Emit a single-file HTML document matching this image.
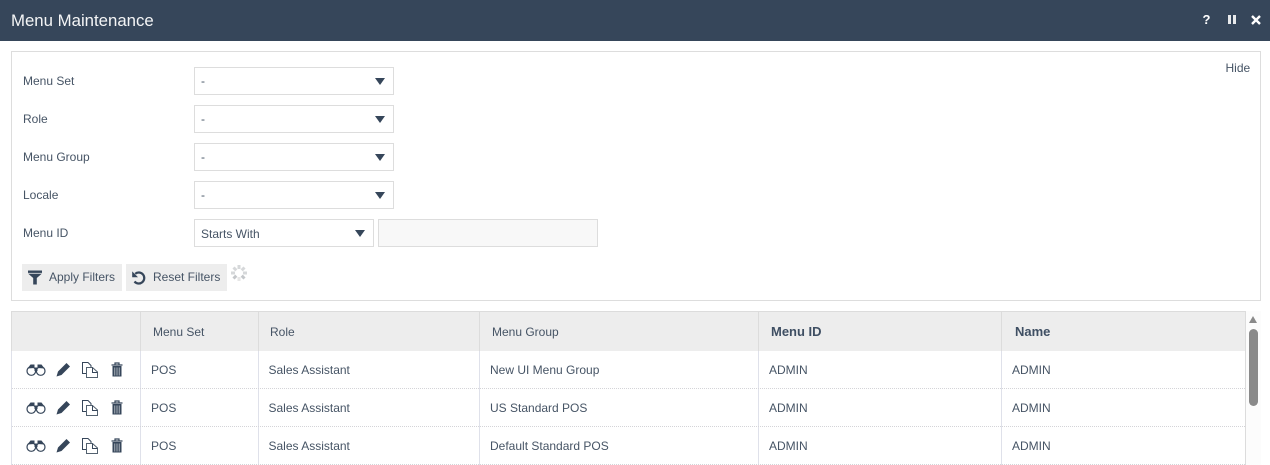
<!DOCTYPE html>
<html><head><meta charset="utf-8"><style>
html,body{margin:0;padding:0;background:#fff}
#p{position:relative;width:1270px;height:465px;overflow:hidden;background:#fff;font:12px/14px "Liberation Sans",sans-serif;color:#465465}
#p div,#p svg,#p span{position:absolute}
.t{white-space:nowrap}
.sel{background:#fff;border:1px solid #ddd;box-sizing:border-box;height:28px;width:200px;left:194px}
.sel span{left:6px;top:6px;white-space:nowrap}
.sel span.w{top:7px}
.arr{width:0;height:0;border-left:5.5px solid transparent;border-right:5.5px solid transparent;border-top:7px solid #36465a;top:10px}
.btn{background:#ededed;height:27px;top:264px}
.v{width:1px;background:#dfe1ea;top:351px;height:114px}
.hv{width:1px;background:#dcdcdc;top:312px;height:39px}
.d{left:12px;width:1233px;height:0;border-top:1px dotted #d4d4d8}
.h{top:325px}.hb{top:325px;font-weight:bold;font-size:13px;color:#3f4f63}
</style></head><body><div id="p">
<div style="left:0;top:0;width:1270px;height:41px;background:#36465a"></div>
<div class="t" style="left:11px;top:11px;font-size:16.8px;line-height:20px;color:#f4f5f6;">Menu Maintenance</div>
<div class="t" style="left:1202.500px;top:12px;font-size:13px;line-height:16px;font-weight:bold;color:#fff">?</div>
<div style="left:1228px;top:15px;width:3px;height:9px;background:#e8eaec"></div>
<div style="left:1233px;top:15px;width:3px;height:9px;background:#e8eaec"></div>
<svg style="left:1250px;top:14px" width="12" height="12" viewBox="0 0 12 12"><path d="M2 2L10 10M10 2L2 10" stroke="#fff" stroke-width="2.4"/></svg>

<div style="left:11px;top:51px;width:1248px;height:248px;border:1px solid #ddd"></div>
<div class="t" style="left:1225.500px;top:61px">Hide</div>

<div class="t" style="left:23px;top:74px">Menu Set</div>
<div class="t" style="left:23px;top:112px">Role</div>
<div class="t" style="left:23px;top:150px">Menu Group</div>
<div class="t" style="left:23px;top:188px">Locale</div>
<div class="t" style="left:23px;top:226px">Menu ID</div>

<div class="sel" style="top:67px"><span>-</span><div class="arr" style="left:180px"></div></div>
<div class="sel" style="top:105px"><span>-</span><div class="arr" style="left:180px"></div></div>
<div class="sel" style="top:143px"><span>-</span><div class="arr" style="left:180px"></div></div>
<div class="sel" style="top:181px"><span>-</span><div class="arr" style="left:180px"></div></div>
<div class="sel" style="top:219px;width:180px"><span class="w">Starts With</span><div class="arr" style="left:160px"></div></div>
<div style="left:378px;top:219px;width:220px;height:28px;box-sizing:border-box;background:#f8f8f8;border:1px solid #ddd"></div>

<div class="btn" style="left:22px;width:100px"></div>
<svg style="left:27px;top:270px" width="16" height="15" viewBox="0 0 16 15"><path d="M1 0.500H15V3.500L9.800 8V14.500H6.200V8L1 3.500Z" fill="#36465a"/><path d="M1 3.300H15" stroke="#ededed" stroke-width="0.800"/></svg>
<div class="t" style="left:49px;top:270px">Apply Filters</div>
<div class="btn" style="left:126px;width:101px"></div>
<svg style="left:131px;top:270px" width="16" height="15" viewBox="0 0 16 15"><path d="M4.200 3.800A5.500 5.500 0 1 1 3.500 11.500" fill="none" stroke="#36465a" stroke-width="2.200"/><path d="M1.200 1.400V7.200H7Z" fill="#36465a"/></svg>
<div class="t" style="left:153px;top:270px">Reset Filters</div>
<svg style="left:230px;top:264px" width="18" height="18" viewBox="0 0 18 18"><g stroke="#d6d8da" stroke-width="3"><path d="M9 1V5"/><path d="M9 13V17" stroke="#e6e6e6"/><path d="M3.500 3.500L6.300 6.300"/><path d="M14.500 3.500L11.700 6.300"/><path d="M1 9H5"/><path d="M13 9H17"/><path d="M3.500 14.500L6.300 11.700" stroke="#c4c7ca"/><path d="M14.500 14.500L11.700 11.700" stroke="#c4c7ca"/></g></svg>

<div style="left:11px;top:311px;width:1235px;height:40px;box-sizing:border-box;background:#ededed;border:1px solid #dcdcdc;border-bottom:0"></div>
<div style="left:11px;top:351px;width:1px;height:114px;background:#dfe1ea"></div>
<div style="left:1245px;top:351px;width:1px;height:114px;background:#dcdcdc"></div>
<div class="hv" style="left:140px"></div><div class="hv" style="left:258px"></div><div class="hv" style="left:479px"></div><div class="hv" style="left:758px"></div><div class="hv" style="left:1001px"></div>
<div class="v" style="left:140px"></div><div class="v" style="left:258px"></div><div class="v" style="left:479px"></div><div class="v" style="left:758px"></div><div class="v" style="left:1001px"></div>
<div class="d" style="top:388px"></div><div class="d" style="top:426px"></div><div class="d" style="top:464px"></div>

<div class="t h" style="left:153px">Menu Set</div>
<div class="t h" style="left:270px">Role</div>
<div class="t h" style="left:492px">Menu Group</div>
<div class="t hb" style="left:771px">Menu ID</div>
<div class="t hb" style="left:1015px">Name</div>

<div class="t" style="left:151px;top:363px">POS</div><div class="t" style="left:268.500px;top:363px">Sales Assistant</div><div class="t" style="left:490px;top:363px">New UI Menu Group</div><div class="t" style="left:769px;top:363px">ADMIN</div><div class="t" style="left:1012px;top:363px">ADMIN</div>
<div class="t" style="left:151px;top:401px">POS</div><div class="t" style="left:268.500px;top:401px">Sales Assistant</div><div class="t" style="left:490px;top:401px">US Standard POS</div><div class="t" style="left:769px;top:401px">ADMIN</div><div class="t" style="left:1012px;top:401px">ADMIN</div>
<div class="t" style="left:151px;top:439px">POS</div><div class="t" style="left:268.500px;top:439px">Sales Assistant</div><div class="t" style="left:490px;top:439px">Default Standard POS</div><div class="t" style="left:769px;top:439px">ADMIN</div><div class="t" style="left:1012px;top:439px">ADMIN</div>

<svg style="left:0;top:0" width="140" height="465" viewBox="0 0 140 465">
<defs><g id="r">
<circle cx="31.300" cy="371" r="4.300" fill="none" stroke="#36465a" stroke-width="1.200"/>
<circle cx="40.700" cy="371" r="4.300" fill="none" stroke="#36465a" stroke-width="1.200"/>
<path d="M27.500 368.500L30.500 364.500H34.500V368ZM44.500 368.500L41.500 364.500H37.500V368ZM34.500 367.500H37.500V371H34.500Z" fill="#36465a"/>
<path d="M58 371.500L66.500 363L70 366.500L61.500 375L56.500 376.500Z" fill="#36465a"/>
<path d="M88 373.500H82.500V362.500H88L91 365.500V367.500" fill="none" stroke="#36465a" stroke-width="1"/>
<path d="M86.500 367.500H92.500L97.500 372V377.500H86.500Z" fill="#fff" stroke="#53616f" stroke-width="1"/>
<path d="M92.500 367.500V372.500H97.500" fill="none" stroke="#36465a" stroke-width="1"/>
<path d="M111.500 365H122.500M115 365V363H119V365" fill="none" stroke="#36465a" stroke-width="1.200"/>
<path d="M112.500 366H121.500V376.500H112.500Z" fill="#36465a"/>
<path d="M114.800 367.500V375.500M117 367.500V375.500M119.200 367.500V375.500" stroke="#c8ced4" stroke-width="0.800"/>
</g></defs>
<use href="#r"/><use href="#r" y="38"/><use href="#r" y="76"/>
</svg>

<div style="left:1246px;top:311px;width:15px;height:154px;background:#fcfcfc"></div>
<div style="left:1249px;top:316px;width:0;height:0;border-left:4.500px solid transparent;border-right:4.500px solid transparent;border-bottom:7px solid #8a8a8a"></div>
<div style="left:1249px;top:329px;width:9px;height:77px;border-radius:4.500px;background:#8a8a8a"></div>
</div></body></html>
